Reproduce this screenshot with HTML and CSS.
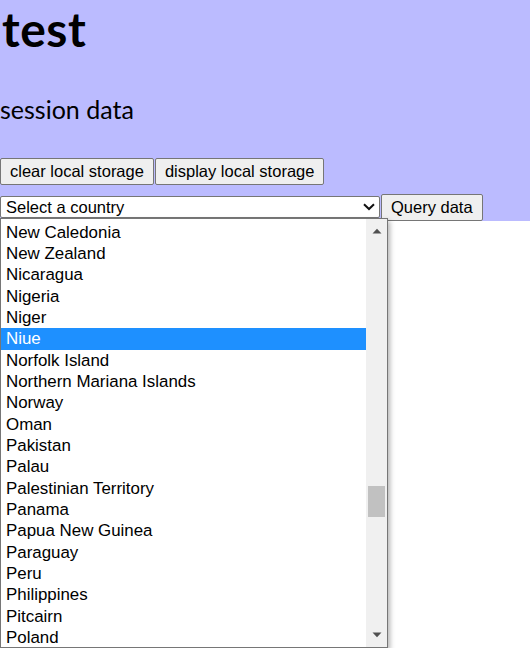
FILE: index.html
```html
<!DOCTYPE html>
<html lang="en">
<head>
<meta charset="utf-8">
<title>test</title>
<link rel="stylesheet" href="styles.css">
</head>
<body>
<div class="panel">
  <h1 class="title">test</h1>
  <h2 class="subtitle">session data</h2>
  <div class="btn-row">
    <button class="btn">clear local storage</button>
    <button class="btn">display local storage</button>
  </div>
  <div class="query-row">
    <div class="select">
      <span class="select-text">Select a country</span>
      <svg class="chevron" width="12" height="8" viewBox="0 0 12 8"><path d="M1 1.2 L6 6 L11 1.2" fill="none" stroke="#111" stroke-width="2"/></svg>
    </div>
    <button class="btn">Query data</button>
  </div>
</div>
<div class="dropdown">
  <div class="options">
    <div class="opt">New Caledonia</div>
    <div class="opt">New Zealand</div>
    <div class="opt">Nicaragua</div>
    <div class="opt">Nigeria</div>
    <div class="opt">Niger</div>
    <div class="opt selected">Niue</div>
    <div class="opt">Norfolk Island</div>
    <div class="opt">Northern Mariana Islands</div>
    <div class="opt">Norway</div>
    <div class="opt">Oman</div>
    <div class="opt">Pakistan</div>
    <div class="opt">Palau</div>
    <div class="opt">Palestinian Territory</div>
    <div class="opt">Panama</div>
    <div class="opt">Papua New Guinea</div>
    <div class="opt">Paraguay</div>
    <div class="opt">Peru</div>
    <div class="opt">Philippines</div>
    <div class="opt">Pitcairn</div>
    <div class="opt">Poland</div>
  </div>
  <div class="scrollbar">
    <div class="sb-arrow">
      <svg width="10" height="6" viewBox="0 0 10 6"><path d="M0.5 5.5 L5 0.8 L9.5 5.5 Z" fill="#505050"/></svg>
    </div>
    <div class="sb-track"><div class="sb-thumb"></div></div>
    <div class="sb-arrow">
      <svg width="10" height="6" viewBox="0 0 10 6"><path d="M0.5 0.5 L5 5.2 L9.5 0.5 Z" fill="#505050"/></svg>
    </div>
  </div>
</div>
</body>
</html>
```

FILE: styles.css
```css
html, body {
  margin: 0;
  padding: 0;
  background: #ffffff;
}

.panel {
  background: #bbbbff;
  display: flex;
  flex-direction: column;
  align-items: flex-start;
}

.title {
  margin: 0;
  font-family: Lato, "Open Sans", sans-serif;
  font-weight: 700;
  font-size: 48px;
  line-height: 58px;
  letter-spacing: 0.5px;
  color: #000;
  padding-left: 2px;
}

.subtitle {
  margin: 36px 0 34px;
  font-family: Lato, "Open Sans", sans-serif;
  font-weight: 400;
  font-size: 25px;
  line-height: 30px;
  color: #000;
}

.btn-row {
  display: flex;
  gap: 1px;
  margin-bottom: 9px;
}

.btn {
  font-family: "Liberation Sans", Arial, sans-serif;
  font-size: 16.5px;
  line-height: 19px;
  color: #000;
  background: #efefef;
  border: 1px solid #767676;
  border-radius: 2px;
  padding: 3px 9px;
  margin: 0;
}

.query-row {
  display: flex;
  align-items: center;
  gap: 1px;
}

.select {
  box-sizing: border-box;
  width: 380px;
  height: 22px;
  margin-top: -1px;
  border: 1px solid #767676;
  border-radius: 2px;
  background: #fff;
  display: flex;
  align-items: center;
  justify-content: space-between;
  padding: 0 4px 0 5px;
  font-family: "Liberation Sans", Arial, sans-serif;
  font-size: 16.5px;
  color: #000;
}

.chevron {
  display: block;
}

.dropdown {
  position: relative;
  z-index: 5;
  margin-top: -3px;
  box-sizing: border-box;
  width: 388px;
  height: 430px;
  border: 1px solid #767676;
  background: #fff;
  box-shadow: 2px 3px 5px rgba(0, 0, 0, 0.3);
  display: flex;
}

.options {
  width: 365px;
  padding-top: 2.8px;
  overflow: hidden;
  font-family: "Liberation Sans", Arial, sans-serif;
  font-size: 16.9px;
  color: #000;
}

.opt {
  height: 21.33px;
  line-height: 21.33px;
  padding-left: 5px;
  white-space: nowrap;
}

.opt.selected {
  background: #1e90ff;
  color: #fff;
}

.scrollbar {
  flex: 1;
  background: #f0f0f0;
  display: flex;
  flex-direction: column;
}

.sb-arrow {
  height: 24px;
  display: flex;
  align-items: center;
  justify-content: center;
}

.sb-arrow svg {
  display: block;
}

.sb-track {
  flex: 1;
  padding-left: 2px;
}

.sb-thumb {
  width: 17px;
  height: 31px;
  margin-top: 243px;
  background: #c1c1c1;
}
```
